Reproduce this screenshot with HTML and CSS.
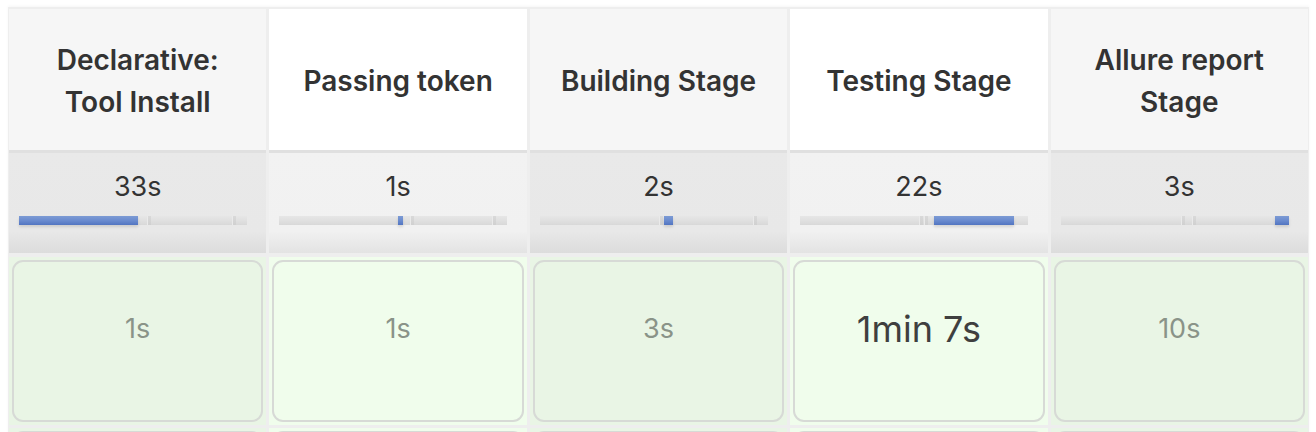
FILE: index.html
```html
<!DOCTYPE html>
<html lang="en">
<head>
<meta charset="utf-8">
<title>Stage View</title>
<link rel="stylesheet" href="styles.css">
</head>
<body>
<div class="stage-table">
  <div class="head odd"><span>Declarative:<br>Tool Install</span></div>
  <div class="head even"><span>Passing token</span></div>
  <div class="head odd"><span>Building Stage</span></div>
  <div class="head even"><span>Testing Stage</span></div>
  <div class="head odd"><span>Allure report<br>Stage</span></div>

  <div class="avg odd">
    <div class="avg-time">33s</div>
    <div class="bar">
      <i class="mark" style="left:128px"></i><i class="mark" style="left:213px"></i>
      <b class="fill" style="left:0;width:119px"></b>
    </div>
  </div>
  <div class="avg even">
    <div class="avg-time">1s</div>
    <div class="bar">
      <i class="mark" style="left:131px"></i><i class="mark" style="left:213px"></i>
      <b class="fill" style="left:119px;width:5px"></b>
    </div>
  </div>
  <div class="avg odd">
    <div class="avg-time">2s</div>
    <div class="bar">
      <i class="mark" style="left:119px"></i><i class="mark" style="left:213px"></i>
      <b class="fill" style="left:124px;width:9px"></b>
    </div>
  </div>
  <div class="avg even">
    <div class="avg-time">22s</div>
    <div class="bar">
      <i class="mark" style="left:119px"></i><i class="mark" style="left:124px"></i>
      <b class="fill" style="left:134px;width:80px"></b>
    </div>
  </div>
  <div class="avg odd">
    <div class="avg-time">3s</div>
    <div class="bar">
      <i class="mark" style="left:120px"></i><i class="mark" style="left:131px"></i>
      <b class="fill" style="left:214px;width:14px"></b>
    </div>
  </div>

  <div class="cell odd"><div class="box">1s</div></div>
  <div class="cell even"><div class="box">1s</div></div>
  <div class="cell odd"><div class="box">3s</div></div>
  <div class="cell even"><div class="box long">1min 7s</div></div>
  <div class="cell odd"><div class="box">10s</div></div>

  <div class="cell odd"><div class="box"></div></div>
  <div class="cell even"><div class="box"></div></div>
  <div class="cell odd"><div class="box"></div></div>
  <div class="cell even"><div class="box"></div></div>
  <div class="cell odd"><div class="box"></div></div>
</div>
</body>
</html>
```
FILE: styles.css
```css
html, body {
  margin: 0;
  padding: 0;
  background: #ffffff;
  overflow: hidden;
}

body {
  font-family: Inter, "Liberation Sans", sans-serif;
  color: #333333;
}

.stage-table {
  margin: 7px 0 0 8px;
  width: 1299px;
  padding: 2px 1px 0 1px;
  background: #eeeeee;
  display: grid;
  grid-template-columns: repeat(5, 1fr);
  grid-template-rows: 141px 104px 171px 171px;
  column-gap: 3px;
  box-shadow: 0 -1px 3px rgba(0, 0, 0, 0.04);
}

.head {
  display: flex;
  align-items: center;
  justify-content: center;
  text-align: center;
  font-size: 28px;
  font-weight: 600;
  line-height: 42px;
  color: #333333;
  padding-top: 3px;
}
.head.odd { background: #f6f6f6; }
.head.even { background: #ffffff; }

.avg {
  border-top: 3px solid #e0e0e0;
  padding: 19px 0 0 10px;
  margin-bottom: 1px;
}
.avg.odd { background: linear-gradient(#e9e9e9 0%, #e8e8e8 78%, #dcdcdc 100%); }
.avg.even { background: linear-gradient(#f2f2f2 0%, #f1f1f1 78%, #e3e3e3 100%); }

.avg-time {
  font-size: 27px;
  line-height: 30px;
  text-align: center;
  padding-right: 10px;
  color: #333333;
}

.bar {
  position: relative;
  width: 228px;
  height: 9px;
  margin-top: 14px;
  background: linear-gradient(#e6e6e6, #e0e0e0 50%, #d8d8d8);
}

.mark {
  position: absolute;
  top: 0;
  width: 3px;
  height: 9px;
  background: linear-gradient(#d9d9d9, #d0d0d0);
  border-left: 1px solid #eaeaea;
}

.fill {
  position: absolute;
  top: 0;
  height: 9px;
  background: linear-gradient(#7d9bd4, #6a8bcf 50%, #5275c1);
  box-shadow: 0 2px 3px rgba(0, 0, 0, 0.12);
}

.cell {
  padding: 3px;
  margin-top: 3px;
}
.cell.odd { background: #e9f5e5; }
.cell.even { background: #f0fdec; }

.box {
  height: 100%;
  box-sizing: border-box;
  border: 2px solid #d7dad6;
  border-radius: 11px;
  text-align: center;
  font-size: 27px;
  line-height: 30px;
  padding-top: 52px;
  color: #8a9388;
}
.box.long {
  font-size: 36px;
  line-height: 40px;
  padding-top: 47px;
  color: #3f3f3f;
}
```
